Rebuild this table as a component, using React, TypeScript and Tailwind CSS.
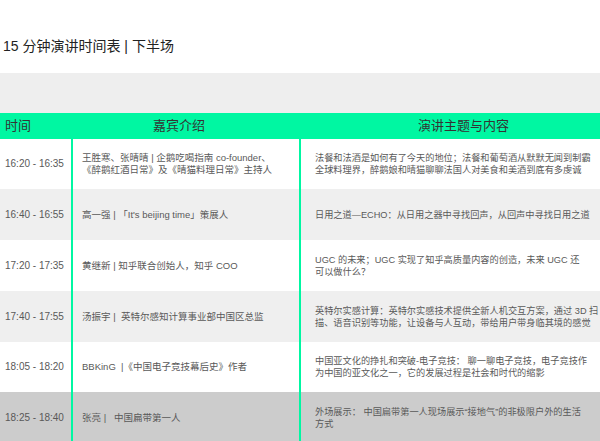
import React from "react";

const rows: { time: string; guest: React.ReactNode; topic: React.ReactNode; bg: string; h: string }[] = [
  {
    time: "16:20 - 16:35",
    guest: (<>王胜寒、张晴晴 | 企鹅吃喝指南 co-founder、<br />《醉鹅红酒日常》及《晴猫料理日常》主持人</>),
    topic: (<>法餐和法酒是如何有了今天的地位；法餐和葡萄酒从默默无闻到制霸<br />全球料理界，醉鹅娘和晴猫聊聊法国人对美食和美酒到底有多虔诚</>),
    bg: "bg-white",
    h: "h-[50px]",
  },
  {
    time: "16:40 - 16:55",
    guest: <>高一强 | 「It's beijing time」策展人</>,
    topic: <>日用之道—ECHO：从日用之器中寻找回声，从回声中寻找日用之道</>,
    bg: "bg-[#efefef]",
    h: "h-[51px]",
  },
  {
    time: "17:20 - 17:35",
    guest: <>黄继新 | 知乎联合创始人，知乎 COO</>,
    topic: (<>UGC 的未来；UGC 实现了知乎高质量内容的创造，未来 UGC 还<br />可以做什么？</>),
    bg: "bg-white",
    h: "h-[51px]",
  },
  {
    time: "17:40 - 17:55",
    guest: <>汤振宇 |&nbsp; 英特尔感知计算事业部中国区总监</>,
    topic: (<>英特尔实感计算：英特尔实感技术提供全新人机交互方案，通过 3D 扫<br />描、语音识别等功能，让设备与人互动，带给用户带身临其境的感觉</>),
    bg: "bg-[#efefef]",
    h: "h-[51px]",
  },
  {
    time: "18:05 - 18:20",
    guest: <>BBKinG&nbsp; |《中国电子竞技幕后史》作者</>,
    topic: (<>中国亚文化的挣扎和突破-电子竞技： 聊一聊电子竞技，电子竞技作<br />为中国的亚文化之一，它的发展过程是社会和时代的缩影</>),
    bg: "bg-white",
    h: "h-[50px]",
  },
  {
    time: "18:25 - 18:40",
    guest: <>张亮 |&nbsp;&nbsp; 中国扁带第一人</>,
    topic: (<>外场展示： 中国扁带第一人现场展示“接地气”的非极限户外的生活<br />方式</>),
    bg: "bg-[#cccccc]",
    h: "h-[51px]",
  },
];

export default function App() {
  return (
    <div
      className="w-[600px] h-[441px] overflow-hidden bg-white"
      style={{ fontFamily: '"Liberation Sans", "Noto Sans CJK SC", sans-serif' }}
    >
      <div className="h-[73px] pt-[36px] pl-[3px] text-[14px] leading-[20px] text-[#222]">
        15 分钟演讲时间表 | 下半场
      </div>
      <div className="h-[40px] bg-[#eeeeee]" />
      <div className="h-[26px] bg-[#00f7a2] flex items-center text-[13px] text-[#333]">
        <div className="w-[73px] pl-[5px]">时间</div>
        <div className="w-[228px] pl-[80px]">嘉宾介绍</div>
        <div className="flex-1 pl-[117px]">演讲主题与内容</div>
      </div>
      {rows.map((r, i) => (
        <div key={i} className={`flex ${r.bg} ${r.h} leading-[12px] text-[#595959]`}>
          <div className="w-[73px] shrink-0 border-r-2 border-[#00f7a2] flex items-center pl-[5px] text-[10px] whitespace-nowrap">
            {r.time}
          </div>
          <div className="w-[228px] shrink-0 border-r-2 border-[#00f7a2] flex items-center pl-[9px] text-[9.5px] whitespace-nowrap">
            <div>{r.guest}</div>
          </div>
          <div className="flex-1 flex items-center pl-[14px] text-[9.2px] whitespace-nowrap">
            <div>{r.topic}</div>
          </div>
        </div>
      ))}
    </div>
  );
}
